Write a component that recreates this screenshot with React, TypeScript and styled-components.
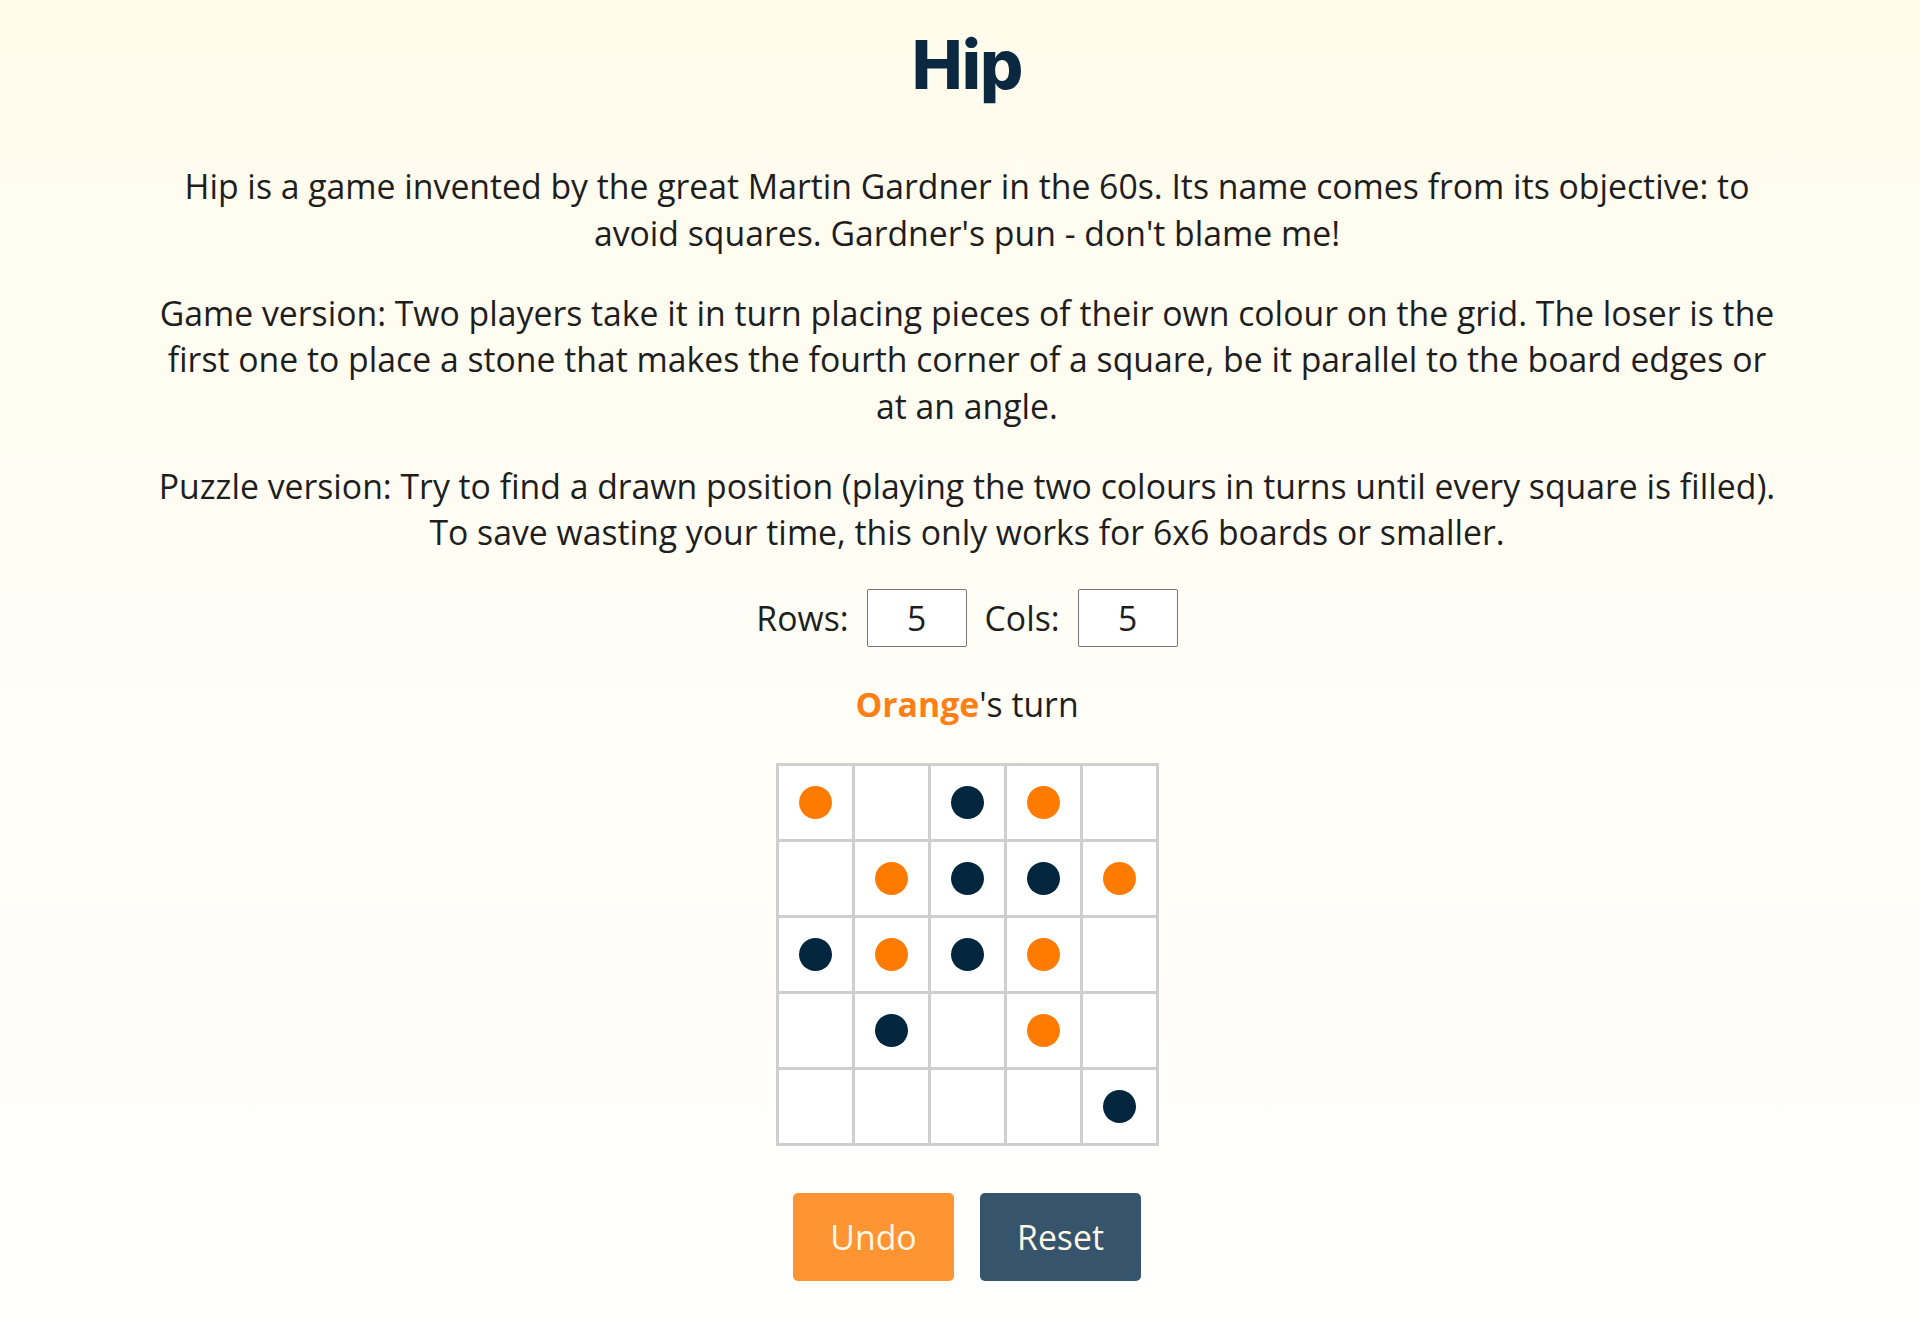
import React, { useState } from 'react';
import styled, { createGlobalStyle } from 'styled-components';

type Stone = 'O' | 'D' | null;

const GlobalStyle = createGlobalStyle`
  html, body {
    margin: 0;
    padding: 0;
  }
  body {
    font-family: "Open Sans", "Liberation Sans", sans-serif;
    color: #1e1e1e;
    background: #fffdf0;
  }
`;

const Page = styled.div`
  min-height: 100vh;
  box-sizing: border-box;
  padding: 0 0 40px 14px;
  background: linear-gradient(180deg, #fffcec 0%, #fffef8 60%, #ffffff 100%);
`;

const Main = styled.main`
  max-width: 1625px;
  margin: 0 auto;
  display: flex;
  flex-direction: column;
  align-items: center;
  text-align: center;
`;

const Title = styled.h1`
  font-family: Inter, "Noto Sans", sans-serif;
  font-weight: 800;
  font-size: 68px;
  line-height: 80px;
  letter-spacing: -1px;
  color: #0a2940;
  margin: 24px 0 59px;
`;

const Para = styled.p`
  font-size: 33.75px;
  line-height: 46.5px;
  margin: 0 0 33.5px;
`;

const Controls = styled.div`
  display: flex;
  align-items: center;
  gap: 18px;
  font-size: 33.75px;
`;

const NumInput = styled.input`
  width: 100px;
  height: 58px;
  box-sizing: border-box;
  border: 1px solid #767676;
  border-radius: 2px;
  background: #fff;
  font-family: inherit;
  font-size: 33.75px;
  color: #1e1e1e;
  text-align: center;
  padding: 0;
`;

const Turn = styled.div`
  font-size: 33.75px;
  line-height: 46px;
  margin: 34px 0 35.5px;
`;

const Player = styled.span`
  font-weight: 700;
  color: #ff7f16;
`;

const Board = styled.div<{ $cols: number }>`
  display: grid;
  grid-template-columns: repeat(${(p) => p.$cols}, 73px);
  grid-auto-rows: 73px;
  gap: 3px;
  padding: 3px;
  background: #cfcfcf;
`;

const Cell = styled.div`
  background: #fff;
  display: flex;
  align-items: center;
  justify-content: center;
  cursor: pointer;
`;

const Dot = styled.span<{ $stone: 'O' | 'D' }>`
  width: 33px;
  height: 33px;
  border-radius: 50%;
  background: ${(p) => (p.$stone === 'O' ? '#ff7b00' : '#03263f')};
`;

const Buttons = styled.div`
  display: flex;
  gap: 26px;
  margin-top: 47px;
`;

const Button = styled.button<{ $variant: 'undo' | 'reset' }>`
  height: 88px;
  padding: 0 36px;
  min-width: 161px;
  border: none;
  border-radius: 5px;
  font-family: inherit;
  font-size: 33.75px;
  color: #fff8e8;
  background: ${(p) => (p.$variant === 'undo' ? '#ff9433' : '#36546b')};
  cursor: pointer;
`;

const initial: Stone[][] = [
  ['O', null, 'D', 'O', null],
  [null, 'O', 'D', 'D', 'O'],
  ['D', 'O', 'D', 'O', null],
  [null, 'D', null, 'O', null],
  [null, null, null, null, 'D'],
];

export default function App() {
  const [rows, setRows] = useState(5);
  const [cols, setCols] = useState(5);
  const [board] = useState<Stone[][]>(initial);

  return (
    <Page>
      <GlobalStyle />
      <Main>
        <Title>Hip</Title>
        <Para>
          Hip is a game invented by the great Martin Gardner in the 60s. Its name comes from its objective: to
          avoid squares. Gardner's pun - don't blame me!
        </Para>
        <Para>
          Game version: Two players take it in turn placing pieces of their own colour on the grid. The loser is the
          first one to place a stone that makes the fourth corner of a square, be it parallel to the board edges or at
          an angle.
        </Para>
        <Para>
          Puzzle version: Try to find a drawn position (playing the two colours in turns until every square is filled).
          To save wasting your time, this only works for 6x6 boards or smaller.
        </Para>
        <Controls>
          <label htmlFor="rows">Rows:</label>
          <NumInput id="rows" type="text" value={rows} onChange={(e) => setRows(Number(e.target.value) || 0)} />
          <label htmlFor="cols">Cols:</label>
          <NumInput id="cols" type="text" value={cols} onChange={(e) => setCols(Number(e.target.value) || 0)} />
        </Controls>
        <Turn>
          <Player>Orange</Player>'s turn
        </Turn>
        <Board $cols={5}>
          {board.map((row, r) =>
            row.map((stone, c) => <Cell key={`${r}-${c}`}>{stone && <Dot $stone={stone} />}</Cell>)
          )}
        </Board>
        <Buttons>
          <Button $variant="undo">Undo</Button>
          <Button $variant="reset">Reset</Button>
        </Buttons>
      </Main>
    </Page>
  );
}
